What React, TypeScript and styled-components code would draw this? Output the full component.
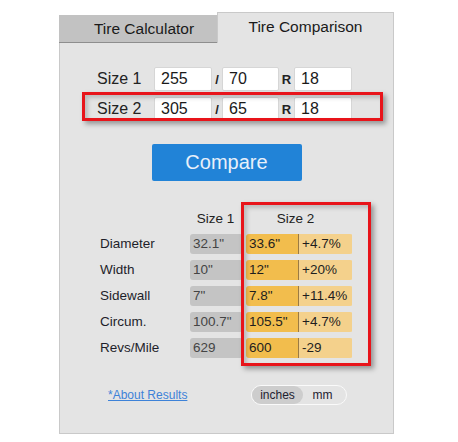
import React from "react";
import styled, { createGlobalStyle } from "styled-components";

const Global = createGlobalStyle`
  html, body { margin: 0; padding: 0; background: #ffffff; }
  body { font-family: "Liberation Sans", Arial, sans-serif; color: #222; }
`;

const Page = styled.div`
  position: relative;
  width: 458px;
  height: 442px;
  padding: 12px 0 0 59px;
  box-sizing: border-box;
`;

const Tabs = styled.div`
  display: flex;
  align-items: flex-end;
  width: 335px;
`;

const Tab = styled.div<{ $active?: boolean }>`
  box-sizing: border-box;
  display: flex;
  align-items: center;
  justify-content: center;
  font-size: 15.5px;
  color: #1a1a1a;
  ${(p) =>
    p.$active
      ? `
    flex: 1;
    height: 31px;
    padding-bottom: 3px;
    background: #e4e4e4;
    border: 1px solid #c9c9c9;
    border-bottom: none;
  `
      : `
    width: 158px;
    height: 28px;
    padding-left: 12px;
    background: #c2c2c2;
    border-bottom: 1px solid #8e8e8e;
  `}
`;

const Panel = styled.div`
  box-sizing: border-box;
  width: 335px;
  height: 391px;
  background: #e4e4e4;
  border: 1px solid #c9c9c9;
  border-top: none;
  padding-top: 24px;
  display: flex;
  flex-direction: column;
`;

const SizeForm = styled.div`
  display: flex;
  flex-direction: column;
  gap: 6px;
  padding-left: 37px;
`;

const SizeRow = styled.div`
  display: flex;
  align-items: center;
  height: 24px;
`;

const SizeLabel = styled.div`
  width: 57px;
  font-size: 16px;
  color: #222;
`;

const Field = styled.div<{ $w: number }>`
  box-sizing: border-box;
  width: ${(p) => p.$w}px;
  height: 24px;
  background: #fff;
  border: 1px solid #d6d6d6;
  border-radius: 2px;
  padding-left: 6px;
  font-size: 16px;
  line-height: 22px;
  color: #1a1a1a;
`;

const Sep = styled.div<{ $w: number }>`
  width: ${(p) => p.$w}px;
  text-align: center;
  font-size: 13px;
  font-weight: bold;
  color: #222;
`;

const CompareButton = styled.div`
  align-self: center;
  margin-top: 23px;
  width: 150px;
  height: 37px;
  border-radius: 2px;
  background: #2183d7;
  color: #e8f0fa;
  font-size: 20px;
  display: flex;
  align-items: center;
  justify-content: center;
`;

const Table = styled.div`
  margin-top: 28px;
  padding-left: 40px;
  display: grid;
  grid-template-columns: 90px 56px 107px;
  grid-auto-rows: 20px;
  grid-template-rows: 19px;
  row-gap: 6px;
  font-size: 13.5px;
`;

const HeadCell = styled.div<{ $shift?: number }>`
  text-align: center;
  color: #222;
  line-height: 19px;
  padding-right: ${(p) => p.$shift ?? 0}px;
`;

const RowLabel = styled.div`
  line-height: 20px;
  color: #1e1e2a;
`;

const GrayCell = styled.div`
  width: 53px;
  height: 20px;
  background: #c4c4c4;
  border-radius: 3px;
  padding-left: 3px;
  box-sizing: border-box;
  line-height: 20px;
  color: #444;
`;

const ResultGroup = styled.div`
  display: flex;
  height: 20px;
  border-radius: 3px;
  overflow: hidden;
`;

const ResultCell = styled.div<{ $light?: boolean }>`
  width: 53px;
  box-sizing: border-box;
  padding-left: 3px;
  line-height: 20px;
  color: #1e1e1e;
  background: ${(p) => (p.$light ? "#f4d18c" : "#f2bd4d")};
  ${(p) => (p.$light ? "" : "border-right: 1px solid #9a7a44;")}
`;

const Footer = styled.div`
  margin-top: 27px;
  padding-left: 48px;
  display: flex;
  align-items: center;
`;

const AboutLink = styled.a`
  font-size: 12px;
  color: #3d82d8;
  text-decoration: underline;
  width: 80px;
  white-space: nowrap;
`;

const Toggle = styled.div`
  margin-left: 63px;
  box-sizing: border-box;
  width: 96px;
  height: 20px;
  border: 1.5px solid #fafafa;
  border-radius: 10px;
  display: flex;
  align-items: center;
  font-size: 12px;
`;

const ToggleOpt = styled.div<{ $on?: boolean }>`
  height: 100%;
  border-radius: 10px;
  display: flex;
  align-items: center;
  justify-content: center;
  color: #1e2230;
  ${(p) => (p.$on ? "width: 51px; background: #cdcdcd;" : "flex: 1; padding-right: 4px;")}
`;

const Highlight = styled.div<{ $x: number; $y: number; $w: number; $h: number }>`
  position: absolute;
  left: ${(p) => p.$x}px;
  top: ${(p) => p.$y}px;
  width: ${(p) => p.$w}px;
  height: ${(p) => p.$h}px;
  box-sizing: border-box;
  border: 3px solid #e8141a;
  box-shadow: 3px 3px 5px rgba(0, 0, 0, 0.35), inset 3px 3px 4px rgba(0, 0, 0, 0.18);
  pointer-events: none;
`;

const sizes = [
  { label: "Size 1", w: "255", a: "70", r: "18" },
  { label: "Size 2", w: "305", a: "65", r: "18" },
];

const rows = [
  { label: "Diameter", s1: '32.1"', s2: '33.6"', d: "+4.7%" },
  { label: "Width", s1: '10"', s2: '12"', d: "+20%" },
  { label: "Sidewall", s1: '7"', s2: '7.8"', d: "+11.4%" },
  { label: "Circum.", s1: '100.7"', s2: '105.5"', d: "+4.7%" },
  { label: "Revs/Mile", s1: "629", s2: "600", d: "-29" },
];

export default function App() {
  return (
    <>
      <Global />
      <Page>
        <Tabs>
          <Tab>Tire Calculator</Tab>
          <Tab $active>Tire Comparison</Tab>
        </Tabs>
        <Panel>
          <SizeForm>
            {sizes.map((s) => (
              <SizeRow key={s.label}>
                <SizeLabel>{s.label}</SizeLabel>
                <Field $w={58}>{s.w}</Field>
                <Sep $w={10}>/</Sep>
                <Field $w={57}>{s.a}</Field>
                <Sep $w={15}>R</Sep>
                <Field $w={58}>{s.r}</Field>
              </SizeRow>
            ))}
          </SizeForm>
          <CompareButton>Compare</CompareButton>
          <Table>
            <div />
            <HeadCell $shift={5}>Size 1</HeadCell>
            <HeadCell $shift={8}>Size 2</HeadCell>
            {rows.map((r) => (
              <React.Fragment key={r.label}>
                <RowLabel>{r.label}</RowLabel>
                <GrayCell>{r.s1}</GrayCell>
                <ResultGroup>
                  <ResultCell>{r.s2}</ResultCell>
                  <ResultCell $light>{r.d}</ResultCell>
                </ResultGroup>
              </React.Fragment>
            ))}
          </Table>
          <Footer>
            <AboutLink href="#">*About Results</AboutLink>
            <Toggle>
              <ToggleOpt $on>inches</ToggleOpt>
              <ToggleOpt>mm</ToggleOpt>
            </Toggle>
          </Footer>
        </Panel>
        <Highlight $x={82} $y={92} $w={301} $h={29} />
        <Highlight $x={241} $y={202} $w={130} $h={164} />
      </Page>
    </>
  );
}
